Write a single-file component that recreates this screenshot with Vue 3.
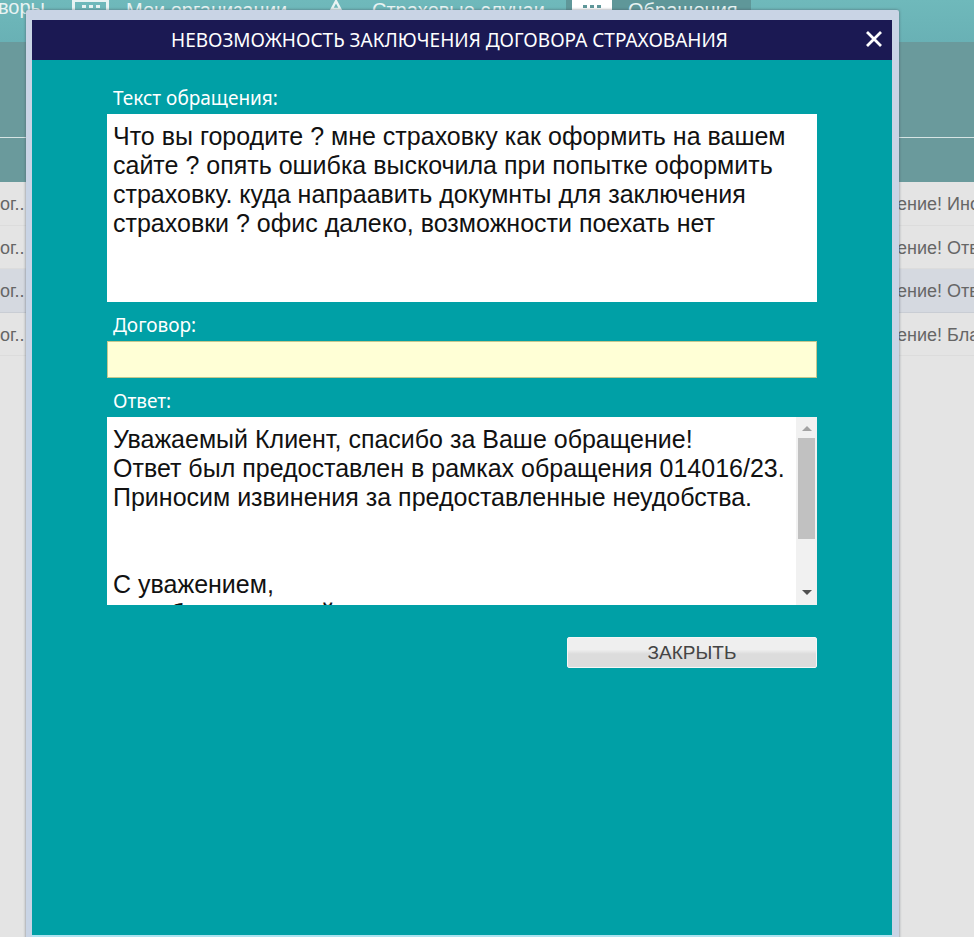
<script setup>
const rows = [
  { left: "ог..", right: "ение! Ино" },
  { left: "ог..", right: "ение! Отв" },
  { left: "ог..", right: "ение! Отв", active: true },
  { left: "ог..", right: "ение! Бла" },
];

const question =
  "Что вы городите ? мне страховку как оформить на вашем сайте ? опять ошибка выскочила при попытке оформить страховку. куда напраавить докумнты для заключения страховки ? офис далеко, возможности поехать нет";

const answer = `Уважаемый Клиент, спасибо за Ваше обращение!
Ответ был предоставлен в рамках обращения 014016/23.
Приносим извинения за предоставленные неудобства.


С уважением,
служба клиентской поддержки`;
</script>

<template>
  <div class="page">
    <nav class="nav">
      <span class="nav-item first">Договоры</span>
      <span class="nav-item orgs">
        <span class="nav-icon"><i></i><i></i><i></i></span>
        Мои организации
      </span>
      <span class="nav-item cases">
        <svg class="nav-tri" width="22" height="20" viewBox="0 0 22 20">
          <path d="M11 2 L2 19 H20 Z M7 10 H15" fill="none" stroke="#e8f3f3" stroke-width="2.4" />
        </svg>
        Страховые случаи
      </span>
      <span class="nav-item active">
        <span class="nav-icon"><i></i><i></i><i></i></span>
        Обращения
      </span>
    </nav>
    <div class="band"></div>
    <div class="band-low"></div>
    <div class="table">
      <div v-for="(row, i) in rows" :key="i" class="row" :class="{ active: row.active }">
        <span>{{ row.left }}</span>
        <span class="right-cell">{{ row.right }}</span>
      </div>
    </div>

    <div class="dialog">
      <div class="dialog-inner">
        <header class="title">
          <span>НЕВОЗМОЖНОСТЬ ЗАКЛЮЧЕНИЯ ДОГОВОРА СТРАХОВАНИЯ</span>
          <svg class="close" width="18" height="18" viewBox="0 0 18 18">
            <path d="M2 2 L16 16 M16 2 L2 16" stroke="#fff" stroke-width="2.8" />
          </svg>
        </header>
        <div class="form">
          <label>Текст обращения:</label>
          <div class="box question">{{ question }}</div>
          <label>Договор:</label>
          <div class="contract"></div>
          <label>Ответ:</label>
          <div class="box answer">
            <div class="answer-text">{{ answer }}</div>
            <div class="scrollbar">
              <span class="arrow up"></span>
              <span class="thumb"></span>
              <span class="arrow down"></span>
            </div>
          </div>
          <div class="actions">
            <button class="close-btn">ЗАКРЫТЬ</button>
          </div>
        </div>
      </div>
    </div>
  </div>
</template>

<style>
html,
body {
  margin: 0;
  background: #e4e4e4;
  overflow: hidden;
}
</style>

<style scoped>
.page {
  position: relative;
  width: 974px;
  height: 937px;
  overflow: hidden;
  background: #e4e4e4;
  font-family: "Liberation Sans", Arial, sans-serif;
}

.nav {
  height: 42px;
  display: flex;
  align-items: flex-start;
  background: linear-gradient(#6fb9bb, #69b1b5);
  color: #e8f3f3;
  font-size: 20px;
  overflow: hidden;
}

.nav-item {
  display: flex;
  align-items: flex-start;
  height: 42px;
  line-height: 20px;
  white-space: nowrap;
}

.nav-item.first {
  width: 45px;
  justify-content: flex-end;
  margin-top: -3px;
}

.nav-item.orgs {
  margin-left: 27px;
  width: 253px;
}

.nav-item.cases {
  width: 241px;
}

.nav-icon {
  display: flex;
  justify-content: center;
  gap: 3px;
  flex: none;
  width: 37px;
  height: 20px;
  margin-right: 17px;
  padding-top: 3px;
  box-sizing: border-box;
  border: 3px solid #e8f3f3;
  border-top-width: 2px;
}

.nav-icon i {
  width: 4px;
  height: 3px;
  background: #e8f3f3;
}

.nav-tri {
  flex: none;
  margin-right: 25px;
  margin-top: -1px;
}

.nav-item.active {
  width: 185px;
  box-sizing: border-box;
  padding-left: 6px;
  background: #5f9799;
}

.active .nav-icon {
  width: 40px;
  margin-right: 16px;
  background: #fff;
  border-color: #fff;
}

.active .nav-icon i {
  background: #5f9799;
}

.band {
  height: 95px;
  background: #6a9a9c;
  border-bottom: 1px solid #d6e4e4;
}

.band-low {
  height: 44px;
  background: #6a9a9c;
}

.table {
  color: #666;
  font-size: 18px;
}

.row {
  display: flex;
  justify-content: space-between;
  height: 42.5px;
  line-height: 44px;
  border-bottom: 1px solid #dcdcdc;
  overflow: hidden;
}

.row.active {
  background: #d5d9e0;
  border-bottom-color: #c9cdd4;
}

.right-cell {
  width: 77px;
  white-space: nowrap;
  overflow: hidden;
}

.dialog {
  position: absolute;
  left: 26px;
  top: 10px;
  width: 873px;
  height: 940px;
  box-sizing: border-box;
  padding: 10px 7px 0 6px;
  background: #c9d4e5;
  border-radius: 2px 2px 0 0;
  box-shadow: 0 0 3px rgba(70, 80, 90, 0.7);
}

.dialog-inner {
  height: 915px;
  background: #00a0a6;
  border-bottom: 2px solid #aee3f0;
}

.title {
  position: relative;
  height: 40px;
  box-sizing: border-box;
  padding-right: 25px;
  display: flex;
  align-items: center;
  justify-content: center;
  background: #1b1953;
  color: #fff;
  font-family: "Noto Sans", "Open Sans", sans-serif;
  font-size: 19px;
}

.close {
  position: absolute;
  right: 9px;
  top: 10px;
}

.form {
  display: flex;
  flex-direction: column;
  width: 710px;
  margin-left: 75px;
}

label {
  height: 29px;
  padding-left: 6px;
  color: #fff;
  font-family: "Noto Sans", "Open Sans", sans-serif;
  font-size: 19px;
  line-height: 26px;
}

.form label:first-child {
  margin-top: 25px;
}

.form label:nth-of-type(2),
.form label:nth-of-type(3) {
  margin-top: 10px;
}

.box {
  height: 188px;
  background: #fff;
  color: #111;
  font-size: 25px;
  line-height: 29px;
  box-sizing: border-box;
  padding: 8px 7px 0 6px;
}

.contract {
  height: 37px;
  box-sizing: border-box;
  background: #ffffd6;
  border: 1px solid #c3c88f;
}

.answer {
  position: relative;
  overflow: hidden;
  white-space: pre-wrap;
}

.scrollbar {
  position: absolute;
  top: 0;
  right: 0;
  bottom: 0;
  width: 21px;
  display: flex;
  flex-direction: column;
  align-items: center;
  background: #f1f1f1;
  line-height: 0;
}

.arrow {
  width: 0;
  height: 0;
  border-left: 5px solid transparent;
  border-right: 5px solid transparent;
}

.arrow.up {
  margin: 9px 0 7px;
  border-bottom: 5px solid #a3a3a3;
}

.arrow.down {
  margin-top: 51px;
  border-top: 5px solid #505050;
}

.thumb {
  width: 17px;
  height: 101px;
  background: #c1c1c1;
}

.actions {
  display: flex;
  justify-content: flex-end;
  margin-top: 32px;
}

.close-btn {
  width: 250px;
  height: 31px;
  padding: 0;
  border: 1px solid #f6f6f6;
  border-radius: 2px;
  background: linear-gradient(#efefef 0, #efefef 40%, #dcdcdc 55%, #dcdcdc 100%);
  color: #444;
  font-family: "Liberation Sans", Arial, sans-serif;
  font-size: 19px;
}
</style>
